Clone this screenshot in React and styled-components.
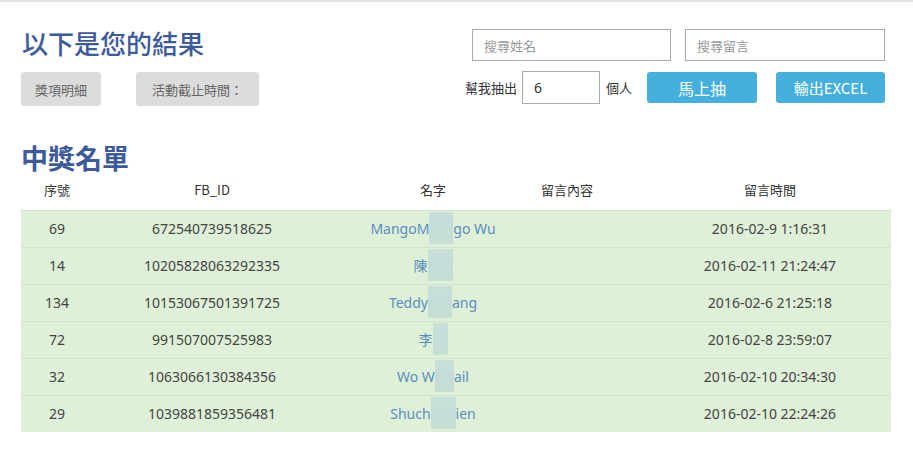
import { Fragment } from 'react'
import styled, { createGlobalStyle } from 'styled-components'

const GlobalStyle = createGlobalStyle`
  body {
    margin: 0;
    background: #fff;
    font-family: "Noto Sans", "Noto Sans CJK TC", sans-serif;
    color: #333;
  }
`

const Page = styled.div`
  border-top: 2px solid #e2e2e2;
  padding: 0 22px 0 21px;
`

const Top = styled.div`
  display: flex;
  justify-content: space-between;
  padding-top: 24px;
`

const Title = styled.h1`
  margin: 0;
  font-size: 26px;
  line-height: 34px;
  font-weight: 500;
  color: #3d5b9b;
  font-family: "Noto Sans CJK TC", sans-serif;
  padding-left: 1px;
`

const ButtonRow = styled.div`
  display: flex;
  gap: 35px;
  margin-top: 12px;
`

const GrayButton = styled.button`
  border: none;
  border-radius: 3px;
  background: #dcdcdc;
  color: #666;
  font-size: 13px;
  font-family: "Noto Sans CJK TC", sans-serif;
  height: 34px;
  padding: 0 ${(p) => p.pad || 14}px;
`

const Right = styled.div`
  display: flex;
  flex-direction: column;
  align-items: flex-end;
  padding-top: 3px;
  margin-right: 6px;
`

const SearchRow = styled.div`
  display: flex;
  gap: 14px;
`

const Search = styled.input`
  box-sizing: border-box;
  width: ${(p) => p.w}px;
  height: 32px;
  border: 1px solid #aaa;
  padding: 0 11px;
  font-size: 13px;
  font-family: "Noto Sans CJK TC", sans-serif;
  color: #333;
  &::placeholder {
    color: #999;
  }
`

const DrawRow = styled.div`
  display: flex;
  align-items: center;
  margin-top: 10px;
`

const Label = styled.span`
  font-size: 13px;
  color: #333;
  font-family: "Noto Sans CJK TC", sans-serif;
  margin: ${(p) => p.m};
`

const Count = styled.input`
  box-sizing: border-box;
  width: 78px;
  height: 33px;
  border: 1px solid #aaa;
  padding: 0 11px;
  font-size: 14px;
  font-family: "Noto Sans", sans-serif;
  color: #333;
`

const BlueButton = styled.button`
  border: none;
  border-radius: 3px;
  background: #45b0de;
  color: #fff;
  height: 31px;
  width: ${(p) => p.w}px;
  margin-left: ${(p) => p.ml}px;
  font-size: ${(p) => p.fs}px;
  font-family: "Noto Sans CJK TC", sans-serif;
  padding: 0;
`

const Heading = styled.h2`
  margin: 35px 0 0;
  font-size: 27px;
  line-height: 34px;
  font-weight: 700;
  color: #3d5b9b;
  font-family: "Noto Sans CJK TC", sans-serif;
`

const Table = styled.div`
  display: grid;
  grid-template-columns: 72px 238px 204px 64px 292px;
`

const Th = styled.div`
  height: 35px;
  line-height: 30px;
  text-align: center;
  font-size: 13px;
  color: #333;
  font-family: "Noto Sans CJK TC", sans-serif;
  padding-left: ${(p) => p.pl || 0}px;
`

const Td = styled.div`
  height: 37px;
  box-sizing: border-box;
  display: flex;
  align-items: center;
  justify-content: center;
  background: #dff0d8;
  border-top: 1px solid #d2e3cb;
  font-size: 14px;
  color: #444;
  padding-left: ${(p) => p.pl || 0}px;
  padding-bottom: 2px;
  white-space: nowrap;
`

const Name = styled.span`
  color: #5a8ec0;
  font-family: "Noto Sans", "Noto Sans CJK TC", sans-serif;
  display: flex;
  align-items: center;
`

const Blur = styled.span`
  display: inline-block;
  width: ${(p) => p.w}px;
  height: 32px;
  background: linear-gradient(180deg, #c9e0d9 0%, #c4dcd8 50%, #c8dfd4 100%);
`

const rows = [
  ['69', '672540739518625', ['MangoM', 24, 'go Wu'], '2016-02-9 1:16:31'],
  ['14', '10205828063292335', ['陳', 25, ''], '2016-02-11 21:24:47'],
  ['134', '10153067501391725', ['Teddy', 24, 'ang'], '2016-02-6 21:25:18'],
  ['72', '991507007525983', ['李', 15, ''], '2016-02-8 23:59:07'],
  ['32', '1063066130384356', ['Wo W', 19, 'ail'], '2016-02-10 20:34:30'],
  ['29', '1039881859356481', ['Shuch', 25, 'ien'], '2016-02-10 22:24:26'],
]

export default function App() {
  return (
    <>
      <GlobalStyle />
      <Page>
        <Top>
          <div>
            <Title>以下是您的結果</Title>
            <ButtonRow>
              <GrayButton>獎項明細</GrayButton>
              <GrayButton pad={16}>活動截止時間：</GrayButton>
            </ButtonRow>
          </div>
          <Right>
            <SearchRow>
              <Search w={199} placeholder='搜尋姓名' />
              <Search w={200} placeholder='搜尋留言' />
            </SearchRow>
            <DrawRow>
              <Label m='0 5px 0 0'>幫我抽出</Label>
              <Count defaultValue='6' />
              <Label m='0 0 0 6px'>個人</Label>
              <BlueButton w={110} ml={15} fs={16}>馬上抽</BlueButton>
              <BlueButton w={109} ml={19} fs={15}>輸出EXCEL</BlueButton>
            </DrawRow>
          </Right>
        </Top>
        <Heading>中獎名單</Heading>
        <Table>
          <Th>序號</Th>
          <Th>FB_ID</Th>
          <Th>名字</Th>
          <Th>留言內容</Th>
          <Th pl={50}>留言時間</Th>
          {rows.map(([no, id, name, time]) => (
            <Fragment key={id}>
              <Td>{no}</Td>
              <Td>{id}</Td>
              <Td>
                <Name>
                  {name[0]}
                  <Blur w={name[1]} />
                  {name[2]}
                </Name>
              </Td>
              <Td />
              <Td pl={50}>{time}</Td>
            </Fragment>
          ))}
        </Table>
      </Page>
    </>
  )
}
